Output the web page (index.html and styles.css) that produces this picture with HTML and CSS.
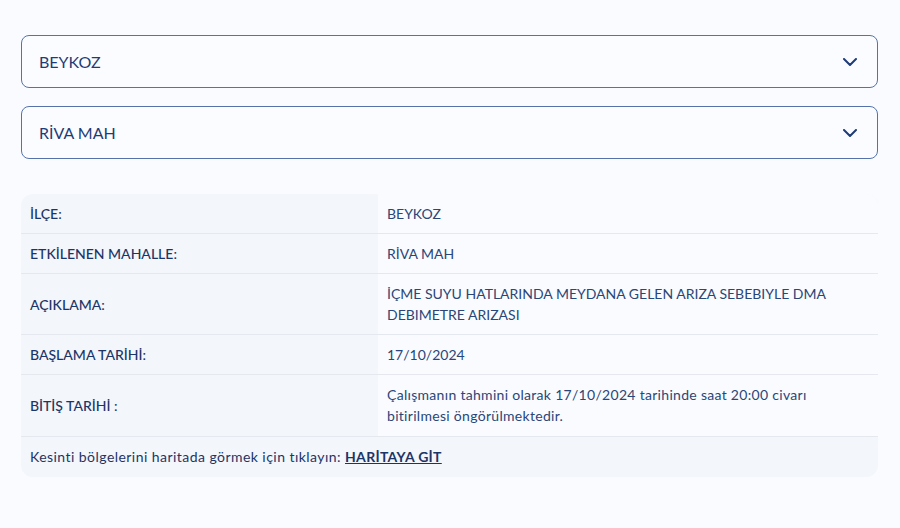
FILE: index.html
```html
<!DOCTYPE html>
<html lang="tr">

<head>
	<meta charset="UTF-8">
	<title>Su Kesintileri - BEYKOZ</title>
	<link rel="stylesheet" href="styles.css">
</head>

<body>
	<div id="wrapper">
		<!-- ilce ve mahalle secimi -->
		<div class="select-box">
			<span class="select-text">BEYKOZ</span>
			<svg class="chevron" width="14" height="8" viewBox="0 0 14 8">
				<path d="M1 1l6 6 6-6" fill="none" stroke="#1e3c78" stroke-width="2" stroke-linecap="round" stroke-linejoin="round" />
			</svg>
		</div>
		<div class="select-box">
			<span class="select-text">RİVA MAH</span>
			<svg class="chevron" width="14" height="8" viewBox="0 0 14 8">
				<path d="M1 1l6 6 6-6" fill="none" stroke="#1e3c78" stroke-width="2" stroke-linecap="round" stroke-linejoin="round" />
			</svg>
		</div>

		<!-- kesinti detaylari -->
		<div class="info-table">
			<div class="row">
				<div class="label">İLÇE:</div>
				<div class="value">BEYKOZ</div>
			</div>
			<div class="row">
				<div class="label">ETKİLENEN MAHALLE:</div>
				<div class="value">RİVA MAH</div>
			</div>
			<div class="row">
				<div class="label">AÇIKLAMA:</div>
				<div class="value">İÇME SUYU HATLARINDA MEYDANA GELEN ARIZA SEBEBIYLE DMA DEBIMETRE ARIZASI</div>
			</div>
			<div class="row">
				<div class="label">BAŞLAMA TARİHİ:</div>
				<div class="value">17/10/2024</div>
			</div>
			<div class="row">
				<div class="label">BİTİŞ TARİHİ :</div>
				<div class="value text">Çalışmanın tahmini olarak 17/10/2024 tarihinde saat 20:00 civarı bitirilmesi öngörülmektedir.</div>
			</div>
			<div class="footer">
				Kesinti bölgelerini haritada görmek için tıklayın: <a href="#" class="map-link">HARİTAYA GİT</a>
			</div>
		</div>
	</div>
</body>

</html>
```

FILE: styles.css
```css
body {
	margin: 0;
	background-color: #f9fbfe;
	font-family: Lato, "Noto Sans", sans-serif;
	color: #1e3a6e;
}

#wrapper {
	padding: 35px 22px 40px 21px;
}

.select-box {
	display: flex;
	align-items: center;
	justify-content: space-between;
	height: 51px;
	padding: 0 20px 0 17px;
	margin-bottom: 18px;
	border: 1px solid #5573aa;
	border-radius: 8px;
	background-color: #fbfcff;
}

.select-text {
	font-size: 16px;
	color: #1f3c75;
}

.chevron {
	display: block;
}

.info-table {
	margin-top: 35px;
	background-color: #f3f6fb;
	border-radius: 12px;
	overflow: hidden;
	font-size: 14px;
	line-height: 21px;
}

.row {
	display: grid;
	grid-template-columns: 357px 1fr;
	border-bottom: 1px solid #e5e9ef;
}

.label {
	display: flex;
	align-items: center;
	padding: 9px 9px;
	font-weight: 500;
	color: #1c3566;
}

.value {
	padding: 9px 30px 9px 9px;
	background-color: #f9fbfe;
	color: #2a4678;
}

.value.text {
	letter-spacing: 0.3px;
	padding-bottom: 10px;
}

.footer {
	padding: 9px 9px 10px;
	letter-spacing: 0.45px;
	color: #1c3566;
}

.map-link {
	color: #1c3566;
	font-weight: 700;
	letter-spacing: 0.3px;
}
```
